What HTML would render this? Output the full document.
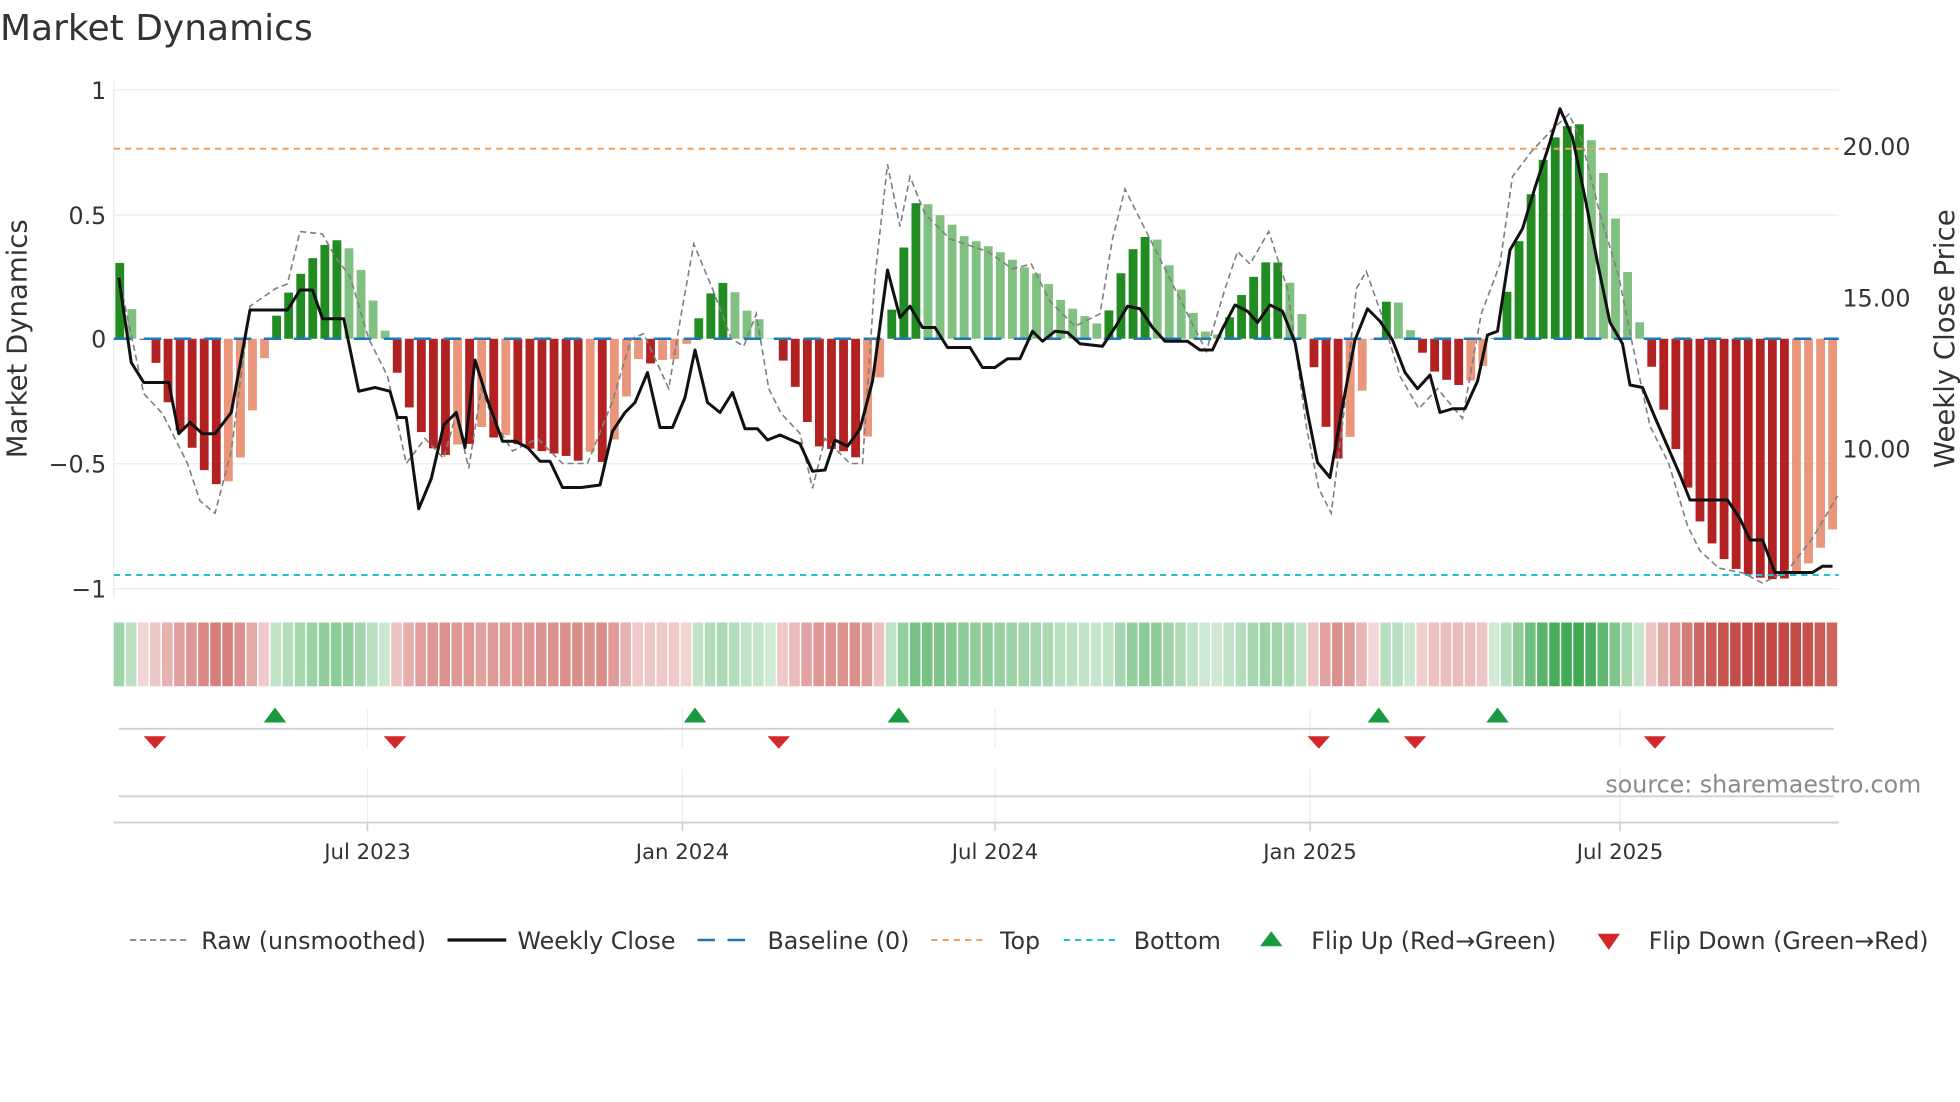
<!DOCTYPE html>
<html><head><meta charset="utf-8"><style>
html,body{margin:0;padding:0;background:#fff;}
svg{display:block;font-family:"DejaVu Sans","Liberation Sans",sans-serif;}
</style></head><body>
<svg id="s" width="1960" height="1102" viewBox="0 0 1568 881.6" xmlns="http://www.w3.org/2000/svg">
<text x="0" y="32" font-size="28.8" fill="#333">Market Dynamics</text>
<g id="grid" stroke="#ececf0" stroke-width="1">
<line x1="91" y1="72" x2="1471" y2="72"/><line x1="91" y1="172" x2="1471" y2="172"/>
<line x1="91" y1="371" x2="1471" y2="371"/><line x1="91" y1="471" x2="1471" y2="471"/>
<line x1="91" y1="65" x2="91" y2="478"/>
</g>
<g font-size="19" fill="#333" text-anchor="end">
<text x="85" y="79">1</text><text x="85" y="179">0.5</text><text x="85" y="278">0</text>
<text x="85" y="378">−0.5</text><text x="85" y="478">−1</text>
</g>
<g font-size="19" fill="#333">
<text x="1474" y="124">20.00</text><text x="1474" y="245">15.00</text><text x="1474" y="366">10.00</text>
</g>
<text transform="translate(21,271) rotate(-90)" font-size="22" fill="#333" text-anchor="middle">Market Dynamics</text>
<text transform="translate(1563,271) rotate(-90)" font-size="22" fill="#333" text-anchor="middle">Weekly Close Price</text>
<g id="bars"></g>
<line x1="91" y1="271" x2="1471" y2="271" stroke="#1f77b4" stroke-width="2" stroke-dasharray="14 10"/>
<line x1="91" y1="119" x2="1471" y2="119" stroke="#f0a060" stroke-width="1.6" stroke-dasharray="5 4"/>
<line x1="91" y1="460" x2="1471" y2="460" stroke="#22bfd0" stroke-width="1.6" stroke-dasharray="5 4"/>
<path id="raw" fill="none" stroke="#808080" stroke-width="1.3" stroke-dasharray="5 3"/>
<path id="close" fill="none" stroke="#111" stroke-width="2.4" stroke-linejoin="round"/>
<g id="strip"></g>
<g stroke="#eceef2" stroke-width="1">
<line x1="294" y1="567" x2="294" y2="598"/><line x1="546" y1="567" x2="546" y2="598"/><line x1="796" y1="567" x2="796" y2="598"/><line x1="1048" y1="567" x2="1048" y2="598"/><line x1="1296" y1="567" x2="1296" y2="598"/>
<line x1="294" y1="615" x2="294" y2="658"/><line x1="546" y1="615" x2="546" y2="658"/><line x1="796" y1="615" x2="796" y2="658"/><line x1="1048" y1="615" x2="1048" y2="658"/><line x1="1296" y1="615" x2="1296" y2="658"/>
</g>
<line x1="95" y1="583" x2="1467" y2="583" stroke="#d0d0d0" stroke-width="1.5"/>
<line x1="95" y1="637" x2="1467" y2="637" stroke="#d0d0d0" stroke-width="1.5"/>
<line x1="91" y1="658" x2="1471" y2="658" stroke="#d0d0d0" stroke-width="1.5"/>
<g stroke="#ccc" stroke-width="1.2">
<line x1="294" y1="658" x2="294" y2="665"/><line x1="546" y1="658" x2="546" y2="665"/><line x1="796" y1="658" x2="796" y2="665"/><line x1="1048" y1="658" x2="1048" y2="665"/><line x1="1296" y1="658" x2="1296" y2="665"/>
</g>
<g id="marks"></g>
<text x="1537" y="634" font-size="19" fill="#8a8a8a" text-anchor="end">source: sharemaestro.com</text>
<g font-size="17" fill="#333" text-anchor="middle">
<text x="294" y="687">Jul 2023</text><text x="546" y="687">Jan 2024</text><text x="796" y="687">Jul 2024</text><text x="1048" y="687">Jan 2025</text><text x="1296" y="687">Jul 2025</text>
</g>
<g font-size="19" fill="#333">
<line x1="104" y1="752" x2="150" y2="752" stroke="#808080" stroke-width="1.4" stroke-dasharray="5 3"/>
<text x="161" y="759">Raw (unsmoothed)</text>
<line x1="358" y1="752" x2="405" y2="752" stroke="#111" stroke-width="2.6"/>
<text x="414" y="759">Weekly Close</text>
<line x1="558" y1="752" x2="603" y2="752" stroke="#1f77b4" stroke-width="2" stroke-dasharray="14 10"/>
<text x="614" y="759">Baseline (0)</text>
<line x1="745" y1="752" x2="790" y2="752" stroke="#f0a060" stroke-width="1.6" stroke-dasharray="5 4"/>
<text x="800" y="759">Top</text>
<line x1="851" y1="752" x2="896" y2="752" stroke="#22bfd0" stroke-width="1.6" stroke-dasharray="5 4"/>
<text x="907" y="759">Bottom</text>
<path d="M1008 757 L1026 757 L1017 745 Z" fill="#1a9a40"/>
<text x="1049" y="759">Flip Up (Red→Green)</text>
<path d="M1278 747 L1296 747 L1287 760 Z" fill="#d62728"/>
<text x="1319" y="759">Flip Down (Green→Red)</text>
</g>
</svg>
<script>
var NS="http://www.w3.org/2000/svg";
function interp(k,x){if(x<=k[0][0])return k[0][1];for(var i=1;i<k.length;i++){if(x<=k[i][0]){var a=k[i-1],b=k[i];return a[1]+(b[1]-a[1])*(x-a[0])/(b[0]-a[0]);}}return k[k.length-1][1];}
var bk=[[95,0.32],[104,0.14],[113,0.01],[122,-0.05],[132,-0.22],[141,-0.35],[150,-0.4],[160,-0.5],[170,-0.58],[180,-0.59],[190,-0.52],[200,-0.33],[210,-0.11],[219,0.07],[229,0.17],[239,0.25],[248,0.31],[258,0.37],[267,0.40],[277,0.38],[287,0.30],[296,0.18],[306,0.07],[316,-0.11],[326,-0.26],[335,-0.36],[345,-0.43],[354,-0.48],[364,-0.42],[374,-0.44],[383,-0.34],[393,-0.4],[403,-0.38],[413,-0.42],[423,-0.44],[433,-0.45],[443,-0.46],[453,-0.47],[463,-0.49],[473,-0.45],[483,-0.5],[490,-0.43],[500,-0.25],[510,-0.08],[520,-0.1],[528,-0.08],[536,-0.1],[546,-0.05],[555,0.03],[565,0.16],[575,0.22],[584,0.23],[594,0.12],[604,0.1],[613,0.04],[623,-0.06],[632,-0.13],[642,-0.28],[652,-0.42],[661,-0.45],[671,-0.43],[680,-0.48],[690,-0.47],[700,-0.28],[709,0.02],[719,0.24],[728,0.52],[738,0.57],[748,0.5],[757,0.49],[767,0.42],[777,0.4],[786,0.38],[796,0.36],[806,0.33],[815,0.3],[825,0.27],[835,0.25],[845,0.17],[855,0.13],[865,0.1],[874,0.07],[882,0.05],[890,0.15],[899,0.3],[909,0.38],[919,0.42],[928,0.39],[938,0.26],[948,0.17],[957,0.08],[967,0.01],[977,0.02],[986,0.11],[996,0.2],[1006,0.27],[1015,0.32],[1025,0.3],[1035,0.19],[1045,0.05],[1054,-0.19],[1064,-0.43],[1073,-0.5],[1083,-0.35],[1093,-0.14],[1102,0.05],[1112,0.19],[1121,0.13],[1131,0.0],[1141,-0.08],[1150,-0.15],[1160,-0.17],[1169,-0.19],[1179,-0.16],[1189,-0.09],[1198,0.03],[1208,0.24],[1218,0.45],[1227,0.62],[1237,0.75],[1247,0.83],[1256,0.86],[1266,0.86],[1276,0.77],[1285,0.63],[1295,0.43],[1305,0.2],[1314,0.02],[1324,-0.16],[1333,-0.32],[1343,-0.48],[1353,-0.64],[1362,-0.76],[1372,-0.84],[1382,-0.9],[1391,-0.93],[1401,-0.95],[1410,-0.96],[1420,-0.965],[1430,-0.96],[1439,-0.94],[1449,-0.89],[1459,-0.82],[1468,-0.75]];
var bars=document.getElementById('bars'),strip=document.getElementById('strip');
var vals=[],N=143,W=9.65;
for(var i=0;i<N;i++){vals.push(interp(bk,95.8+W*i));}
for(var i=0;i<N;i++){var v=vals[i],p=i>0?vals[i-1]:0;var dark=Math.abs(v)>=Math.abs(p)-0.003&&(v*p>=0||i==0)||(v*p<0);
var c=v>=0?(dark?'#228b22':'#80c080'):(dark?'#b22222':'#e9967a');
var x=91+W*i+1.3,w=W-2.6,y0=271,y1=271-v*199.5;
var r=document.createElementNS(NS,'rect');r.setAttribute('x',x);r.setAttribute('width',w);r.setAttribute('y',Math.min(y0,y1));r.setAttribute('height',Math.max(0.5,Math.abs(y1-y0)));r.setAttribute('fill',c);bars.appendChild(r);
var a=Math.min(1,0.22+0.8*Math.abs(v));var col=v>=0?[46,160,67]:[195,70,65];
var s=document.createElementNS(NS,'rect');s.setAttribute('x',91+W*i);s.setAttribute('width',W-1.2);s.setAttribute('y',498);s.setAttribute('height',51);s.setAttribute('fill','rgb('+col.join(',')+')');s.setAttribute('fill-opacity',a.toFixed(2));strip.appendChild(s);}
var rk=[[95,0.25],[115,-0.22],[130,-0.3],[150,-0.5],[160,-0.65],[172,-0.7],[185,-0.45],[200,0.13],[220,0.2],[230,0.22],[240,0.43],[258,0.42],[268,0.33],[280,0.25],[295,0.0],[310,-0.15],[325,-0.5],[340,-0.4],[355,-0.48],[365,-0.3],[375,-0.52],[385,-0.2],[395,-0.33],[410,-0.45],[430,-0.4],[450,-0.5],[470,-0.5],[490,-0.25],[505,0.0],[515,0.02],[535,-0.2],[545,0.1],[555,0.38],[570,0.2],[585,0.0],[595,-0.03],[605,0.1],[615,-0.2],[625,-0.3],[640,-0.38],[650,-0.6],[660,-0.4],[680,-0.5],[690,-0.5],[700,0.25],[710,0.7],[720,0.45],[728,0.65],[740,0.5],[760,0.4],[790,0.35],[810,0.28],[825,0.3],[840,0.15],[860,0.05],[880,0.1],[890,0.4],[900,0.6],[915,0.45],[930,0.3],[950,0.1],[965,-0.05],[980,0.2],[990,0.35],[1000,0.3],[1015,0.43],[1030,0.2],[1045,-0.35],[1055,-0.6],[1065,-0.7],[1075,-0.3],[1085,0.2],[1093,0.27],[1105,0.1],[1120,-0.15],[1135,-0.28],[1150,-0.2],[1170,-0.32],[1185,0.1],[1200,0.3],[1210,0.65],[1225,0.75],[1240,0.83],[1255,0.9],[1265,0.8],[1280,0.5],[1295,0.25],[1305,0.0],[1320,-0.35],[1335,-0.5],[1350,-0.75],[1360,-0.85],[1375,-0.92],[1395,-0.94],[1410,-0.98],[1430,-0.93],[1450,-0.8],[1470,-0.63]];
var d='';rk.forEach(function(p,j){d+=(j?'L':'M')+p[0]+' '+(271-p[1]*199.5).toFixed(1)+' ';});document.getElementById('raw').setAttribute('d',d);
var ck=[[95,222],[105,290],[115,306],[135,306],[143,347],[152,338],[162,347],[172,347],[185,330],[200,248],[230,248],[240,232],[250,232],[258,255],[275,255],[287,313],[300,310],[312,313],[318,334],[325,334],[335,407],[345,383],[355,340],[365,330],[372,358],[380,288],[390,320],[402,353],[412,353],[422,358],[432,369],[440,369],[450,390],[465,390],[480,388],[490,345],[500,330],[508,322],[518,298],[528,342],[538,342],[548,318],[556,280],[566,322],[576,330],[586,314],[596,343],[606,343],[614,352],[624,348],[640,355],[650,377],[660,376],[668,352],[678,357],[688,343],[698,305],[710,216],[720,254],[728,245],[738,262],[748,262],[758,278],[776,278],[786,294],[796,294],[806,287],[816,287],[826,265],[834,273],[844,265],[854,266],[864,275],[882,277],[892,262],[902,245],[912,247],[922,262],[932,273],[950,273],[960,280],[970,280],[978,263],[988,244],[998,249],[1006,258],[1016,244],[1026,249],[1036,274],[1046,330],[1054,370],[1064,382],[1074,325],[1084,272],[1094,247],[1104,257],[1114,272],[1124,298],[1134,311],[1144,300],[1152,330],[1162,327],[1172,327],[1182,305],[1190,268],[1198,265],[1208,200],[1218,183],[1228,150],[1238,120],[1248,87],[1258,110],[1268,158],[1278,210],[1288,258],[1298,275],[1304,308],[1314,310],[1324,334],[1334,357],[1344,380],[1352,400],[1382,400],[1392,415],[1400,432],[1410,432],[1420,458],[1450,458],[1458,453],[1466,453]];
d='';ck.forEach(function(p,j){d+=(j?'L':'M')+p[0]+' '+p[1]+' ';});document.getElementById('close').setAttribute('d',d);
var m=document.getElementById('marks');
[220,556,719,1103,1198].forEach(function(x){var t=document.createElementNS(NS,'path');t.setAttribute('d','M'+(x-9)+' 578 L'+(x+9)+' 578 L'+x+' 566 Z');t.setAttribute('fill','#1a9a40');m.appendChild(t);});
[124,316,623,1055,1132,1324].forEach(function(x){var t=document.createElementNS(NS,'path');t.setAttribute('d','M'+(x-9)+' 589 L'+(x+9)+' 589 L'+x+' 599 Z');t.setAttribute('fill','#d62728');m.appendChild(t);});
</script>
</body></html>
